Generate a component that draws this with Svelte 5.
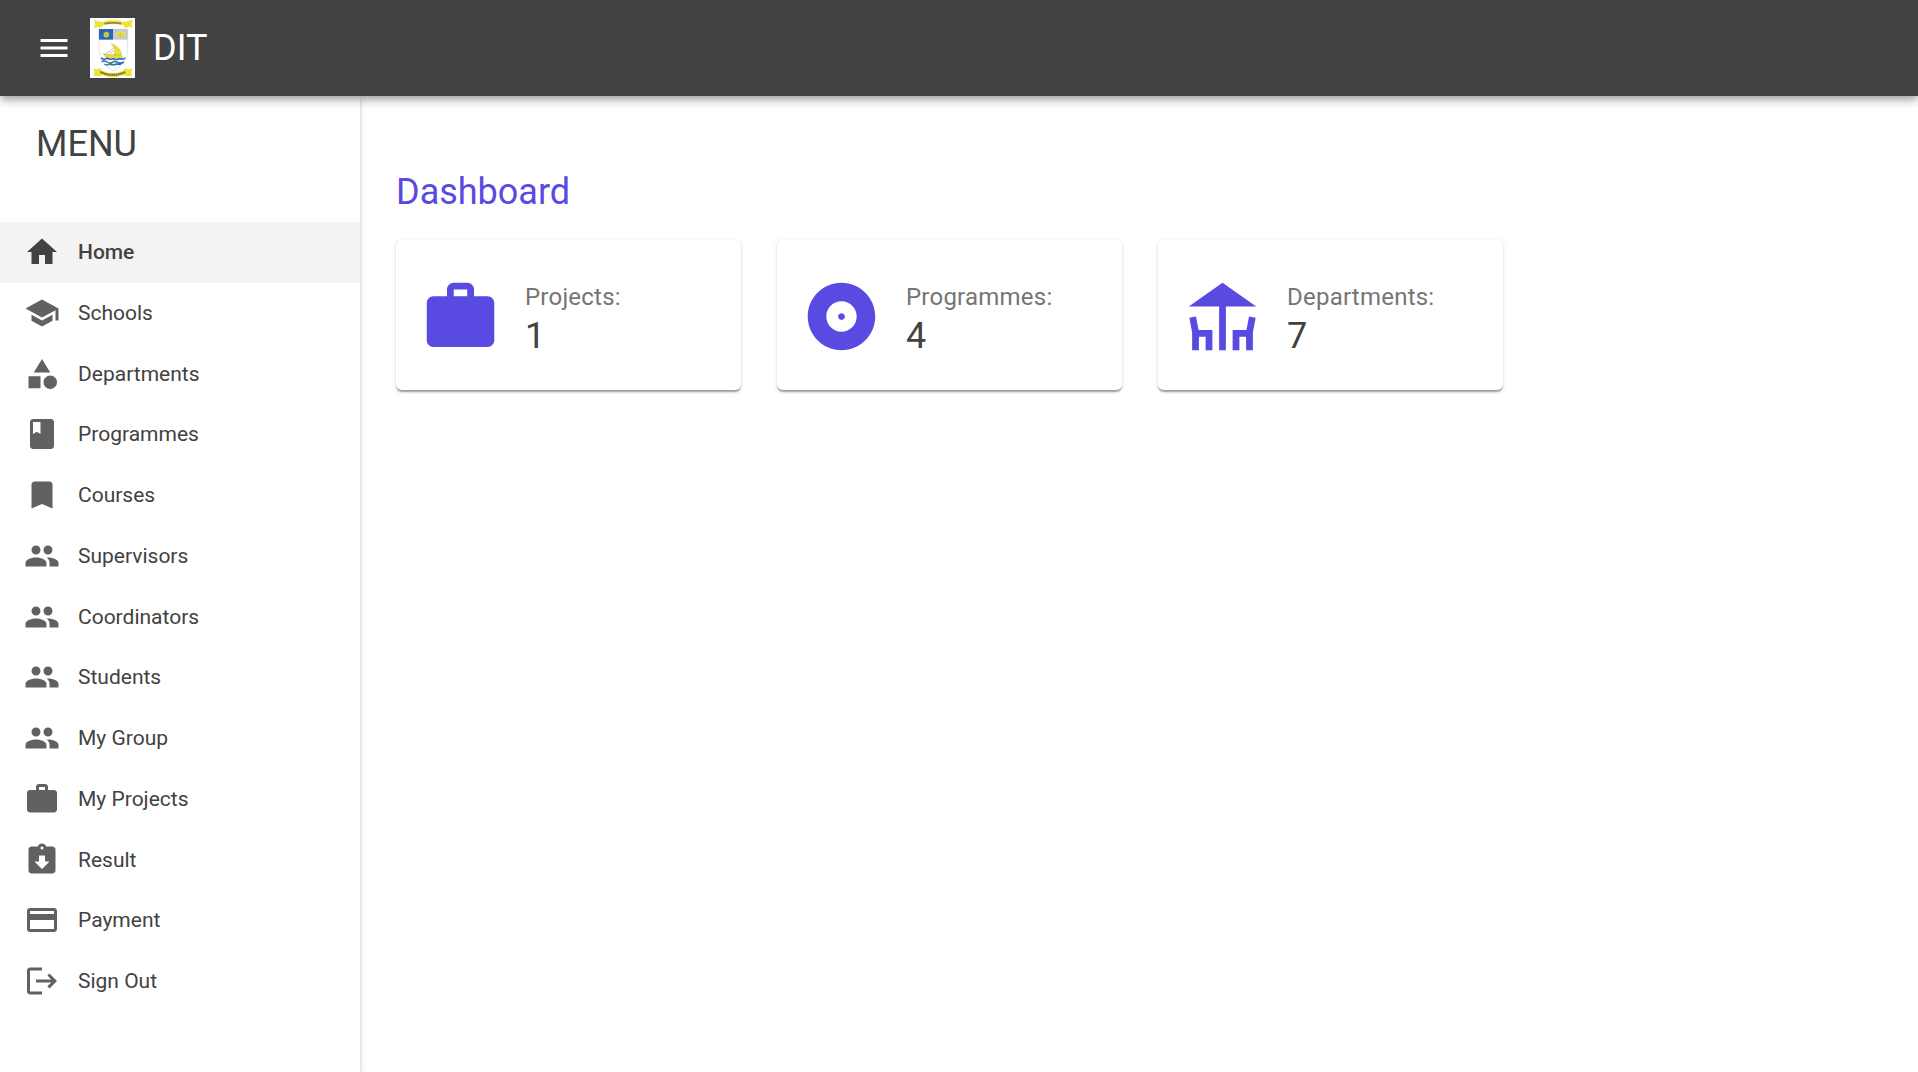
<script>
  const group =
    'M16 11c1.66 0 2.99-1.34 2.99-3S17.66 5 16 5c-1.66 0-3 1.34-3 3s1.34 3 3 3zm-8 0c1.66 0 2.99-1.34 2.99-3S9.66 5 8 5C6.34 5 5 6.34 5 8s1.34 3 3 3zm0 2c-2.33 0-7 1.17-7 3.5V19h14v-2.5c0-2.33-4.67-3.5-7-3.5zm8 0c-.29 0-.62.02-.97.05 1.16.84 1.97 1.97 1.97 3.45V19h6v-2.5c0-2.33-4.67-3.5-7-3.5z';
  const work =
    'M20 6h-4V4c0-1.11-.89-2-2-2h-4c-1.11 0-2 .89-2 2v2H4c-1.11 0-1.99.89-1.99 2L2 19c0 1.11.89 2 2 2h16c1.11 0 2-.89 2-2V8c0-1.11-.89-2-2-2zm-6 0h-4V4h4v2z';

  const links = [
    { label: 'Home', icon: 'M10 20v-6h4v6h5v-8h3L12 3 2 12h3v8z', active: true },
    { label: 'Schools', icon: 'M5 13.18v4L12 21l7-3.82v-4L12 17l-7-3.82zM12 3L1 9l11 6 9-4.91V17h2V9L12 3z' },
    { label: 'Departments', icon: 'M12 2l-5.5 9h11zM17.5 13a4.5 4.5 0 1 0 0 9 4.5 4.5 0 0 0 0-9zM3 13.5h8v8H3z' },
    { label: 'Programmes', icon: 'M18 2H6c-1.1 0-2 .9-2 2v16c0 1.1.9 2 2 2h12c1.1 0 2-.9 2-2V4c0-1.1-.9-2-2-2zM6 4h5v8l-2.5-1.5L6 12V4z' },
    { label: 'Courses', icon: 'M17 3H7c-1.1 0-1.99.9-1.99 2L5 21l7-3 7 3V5c0-1.1-.9-2-2-2z' },
    { label: 'Supervisors', icon: group },
    { label: 'Coordinators', icon: group },
    { label: 'Students', icon: group },
    { label: 'My Group', icon: group },
    { label: 'My Projects', icon: work },
    { label: 'Result', icon: 'M19 3h-4.18C14.4 1.84 13.3 1 12 1c-1.3 0-2.4.84-2.82 2H5c-1.1 0-2 .9-2 2v14c0 1.1.9 2 2 2h14c1.1 0 2-.9 2-2V5c0-1.1-.9-2-2-2zm-7 0c.55 0 1 .45 1 1s-.45 1-1 1-1-.45-1-1 .45-1 1-1zm0 15l-5-5h3V9h4v4h3l-5 5z' },
    { label: 'Payment', icon: 'M20 4H4c-1.11 0-1.99.89-1.99 2L2 18c0 1.11.89 2 2 2h16c1.11 0 2-.89 2-2V6c0-1.11-.89-2-2-2zm0 14H4v-6h16v6zm0-10H4V6h16v2z' },
    { label: 'Sign Out', icon: 'M17 7l-1.41 1.41L18.17 11H8v2h10.17l-2.58 2.58L17 17l5-5zM4 5h8V3H4c-1.1 0-2 .9-2 2v14c0 1.1.9 2 2 2h8v-2H4V5z' }
  ];

  const cards = [
    { label: 'Projects:', value: 1, icon: work },
    { label: 'Programmes:', value: 4, icon: 'M12 2C6.48 2 2 6.48 2 12s4.48 10 10 10 10-4.48 10-10S17.52 2 12 2zm0 14.5c-2.49 0-4.5-2.01-4.5-4.5S9.51 7.5 12 7.5s4.5 2.01 4.5 4.5-2.01 4.5-4.5 4.5zm0-5.5c-.55 0-1 .45-1 1s.45 1 1 1 1-.45 1-1-.45-1-1-1z' },
    { label: 'Departments:', value: 7, icon: 'M22 9L12 2 2 9h9v13h2V9zM4.14 12l-1.96.37.82 4.37V22h2l.02-4H7v4h2v-6H4.9zM19.1 16H15v6h2v-4h1.98l.02 4h2v-5.26l.82-4.37-1.96-.37z' }
  ];
</script>

{#snippet icon(d)}
  <svg class="icon" viewBox="0 0 24 24" aria-hidden="true"><path {d} /></svg>
{/snippet}

<div class="app">
  <header>
    <button aria-label="Toggle menu">{@render icon('M3 18h18v-2H3v2zm0-5h18v-2H3v2zm0-7v2h18V6H3z')}</button>
    <svg class="crest" viewBox="0 0 135 180" aria-hidden="true">
      <path fill="#fff" d="M0 0h135v180H0z" />
      <path fill="#fff" stroke="#d5d5dc" stroke-width="2" d="M27 34h86v62q-2 42-43 63Q29 138 27 96z" />
      <path fill="#2868b2" d="M27 33h43v32H27z" />
      <path fill="#c6c8cb" d="M71 33h42v32H71z" />
      <circle cx="49" cy="50" r="8" fill="#e3dc35" />
      <path stroke="#a9b860" stroke-width="2" d="M49 40v20M39 50h20M42 43l14 14M56 43L42 57" />
      <path fill="#e6e04a" d="M77 43q8-5 14 0 7-5 15 0v14q-8-4-15 0-7-4-14 0z" />
      <path stroke="#a9a75c" stroke-width="1.5" d="M91 43v14M84 46v6M99 46v6" />
      <path fill="#ecdf35" stroke="#c4b545" stroke-width="1.5" d="M64 77q28 8 31 36l-24-2q10-14-7-34z" />
      <path fill="#ecdf35" stroke="#b3a43f" stroke-width="1.5" d="M40 107q15 5 51 4l7 7q-36 5-49 1z" />
      <path fill="none" stroke="#8d854a" stroke-width="1.5" d="M46 108q16-7 26-20M58 110l12-12" />
      <path fill="none" stroke="#2d70ae" stroke-width="5" d="M33 120q9 7 18 1 9 5 18 1 9 5 18 0 9 3 19-1" />
      <path fill="none" stroke="#2d70ae" stroke-width="4.5" d="M35 131q8-5 16 1t16 1 16 0 19-1M43 138q9 6 18 0 9 5 18 0 9 3 16-2" />
      <path fill="#eee62c" stroke="#d8d04a" d="M14 7l10 4 16 1q30-11 60 0l15-2 12-4-3 12 3 10-11-3-8 5-8-10q-30-5-59 0l-10 9-8-3-10 4 3-11z" />
      <path fill="none" stroke="#77712f" stroke-width="5" stroke-dasharray="4 1" d="M44 17q25-5 50 0" />
      <path fill="#eee62c" stroke="#d8d04a" d="M11 152l10 3 9-4 5 8q32 14 65 0l6-8 9 4 11-3-3 12 3 9-14 1-14-3q-30 13-59 0l-13 3-15-2 4-9z" />
      <path fill="none" stroke="#77712f" stroke-width="6" stroke-dasharray="5 1" d="M31 162q37 17 76 0" />
    </svg>
    <span class="brand">DIT</span>
  </header>

  <div class="body">
    <aside>
      <h2>MENU</h2>
      <nav>
        {#each links as link}
          <a href="#top" class:active={link.active}>
            {@render icon(link.icon)}
            <span>{link.label}</span>
          </a>
        {/each}
      </nav>
    </aside>

    <main>
      <h1>Dashboard</h1>
      <div class="cards">
        {#each cards as card}
          <section class="card">
            {@render icon(card.icon)}
            <div class="stat">
              <p class="label">{card.label}</p>
              <p class="value">{card.value}</p>
            </div>
          </section>
        {/each}
      </div>
    </main>
  </div>
</div>

<style>
  :global(body) {
    margin: 0;
    background: #fff;
  }
  .app {
    display: flex;
    flex-direction: column;
    height: 100vh;
    overflow: hidden;
    font-family: Roboto, 'Liberation Sans', sans-serif;
    color: #424242;
  }
  h1, h2, p {
    margin: 0;
    font-weight: 400;
  }
  h1, h2, .brand {
    font-size: 36px;
    line-height: 48px;
  }
  .icon {
    display: block;
    flex: none;
    width: 36px;
    height: 36px;
    fill: currentColor;
  }
  header {
    position: relative;
    z-index: 2;
    display: flex;
    flex: none;
    align-items: center;
    box-sizing: border-box;
    height: 96px;
    padding: 0 36px;
    gap: 18px;
    background: #424242;
    color: #fff;
    box-shadow:
      0 3px 6px -1.5px rgba(0, 0, 0, 0.2),
      0 6px 7.5px rgba(0, 0, 0, 0.14),
      0 1.5px 15px rgba(0, 0, 0, 0.12);
  }
  button {
    padding: 0;
    border: 0;
    background: none;
    color: inherit;
  }
  .crest {
    width: 45px;
    height: 60px;
  }
  .body {
    display: flex;
    flex: 1;
    min-height: 0;
  }
  aside {
    flex: none;
    width: 360px;
    background: #fff;
    box-shadow:
      0 4.5px 1.5px -3px rgba(0, 0, 0, 0.2),
      0 3px 3px rgba(0, 0, 0, 0.14),
      0 1.5px 7.5px rgba(0, 0, 0, 0.12);
  }
  h2 {
    padding: 24px 36px 53.75px;
  }
  nav a {
    display: flex;
    align-items: center;
    box-sizing: border-box;
    height: 60.75px;
    padding: 0 24px;
    gap: 18px;
    font-size: 21px;
    color: #424242;
    text-decoration: none;
  }
  nav .icon {
    color: #616161;
  }
  nav .active {
    background: #f3f3f3;
    font-weight: 500;
  }
  .active .icon {
    color: #424242;
  }
  main {
    flex: 1;
    padding: 72px 36px;
  }
  .cards {
    display: flex;
    gap: 36px;
    margin-top: 24px;
  }
  .card {
    display: flex;
    align-items: flex-start;
    box-sizing: border-box;
    width: 345px;
    height: 150px;
    padding: 36px 24px 0;
    gap: 24px;
    border-radius: 6px;
    background: #fff;
    box-shadow:
      0 3px 1.5px -1.5px rgba(0, 0, 0, 0.2),
      0 1.5px 1.5px rgba(0, 0, 0, 0.14),
      0 1.5px 4.5px rgba(0, 0, 0, 0.12);
  }
  .card .icon {
    width: 81px;
    height: 81px;
    color: #594ae2;
  }
  h1 {
    color: #594ae2;
  }
  .stat {
    padding-top: 3px;
  }
  .label {
    font-size: 24px;
    line-height: 36px;
    letter-spacing: 0.00938em;
    color: #757575;
  }
  .value {
    font-size: 36px;
    line-height: 42px;
  }
</style>
